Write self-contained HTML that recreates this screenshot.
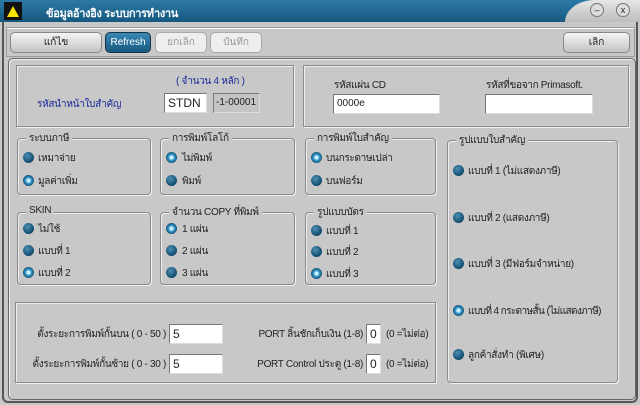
<!DOCTYPE html>
<html><head><meta charset="utf-8"><style>
*{box-sizing:border-box;margin:0;padding:0}
body{width:640px;height:405px;overflow:hidden;background:#c8c8c8;font-family:"Liberation Sans","DejaVu Sans",sans-serif;font-size:10px;color:#222;position:relative}
.a{position:absolute}
.title{left:0;top:0;width:640px;height:22px;background:linear-gradient(#2c7aa6,#16587f);}
.tr{left:565px;top:0;width:75px;height:22px;background:linear-gradient(#e6e6e6,#bdbdbd);border-top-left-radius:30px 22px}
.btn{position:absolute;height:21px;border:1px solid #888;border-radius:5px;background:linear-gradient(#f4f4f4,#c4c4c4);text-align:center;line-height:19px;font-size:10px}
.grp{position:absolute;border:1px solid #8a8a8a;border-radius:4px;box-shadow:1px 1px 0 #eee inset,1px 1px 0 #f0f0f0}
.lg{position:absolute;top:-8px;left:8px;background:#c8c8c8;padding:0 3px;font-size:10px;white-space:nowrap;letter-spacing:-0.3px}
.r{position:absolute;width:11px;height:11px;border-radius:50%;background:radial-gradient(circle at 40% 35%,#4f8fb4,#0f4a6c 70%,#08324a)}
.r.on{background:radial-gradient(circle,#c8f0ff 0 20%,#3aa0d0 35%,#0f4a6c 75%)}
.t{position:absolute;font-size:10px;white-space:nowrap;letter-spacing:-0.3px}
.rt{position:absolute;font-size:10px;white-space:nowrap;letter-spacing:-0.3px;text-align:right}
.in{position:absolute;height:20px;background:#fff;border:1px solid #777;border-right-color:#ddd;border-bottom-color:#ddd;font-size:12px;padding-left:3px;line-height:18px;white-space:nowrap;overflow:hidden}
</style></head><body>
<div class="a title"></div>
<div class="a tr"></div>
<div class="a" style="left:4px;top:2px;width:18px;height:18px;background:#111"></div>
<div class="a" style="left:7px;top:6px;width:0;height:0;border-left:6px solid transparent;border-right:6px solid transparent;border-bottom:11px solid #ffe600"></div>
<div class="t" style="left:46px;top:4px;color:#fff;font-weight:bold;font-size:11px">ข้อมูลอ้างอิง ระบบการทำงาน</div>
<div class="a" style="left:590px;top:3px;width:14px;height:14px;border-radius:50%;border:1px solid #777;background:#ddd;font-size:9px;text-align:center;line-height:12px">–</div>
<div class="a" style="left:616px;top:3px;width:14px;height:14px;border-radius:50%;border:1px solid #777;background:#ddd;font-size:9px;text-align:center;line-height:12px">x</div>
<div class="a" style="left:2px;top:22px;width:636px;height:381px;border:2px solid #555;border-top:none;border-radius:0 0 6px 6px"></div>
<div class="a" style="left:6px;top:27px;width:629px;height:30px;border:1px solid #999;box-shadow:0 1px 0 #fff inset"></div>
<div class="btn" style="left:10px;top:32px;width:92px">แก้ไข</div>
<div class="btn" style="left:105px;top:32px;width:46px;background:linear-gradient(#3a87b3,#175a82);color:#fff;border-color:#134">Refresh</div>
<div class="btn" style="left:155px;top:32px;width:52px;background:#eee;color:#999;border-color:#aaa">ยกเลิก</div>
<div class="btn" style="left:210px;top:32px;width:52px;background:#eee;color:#999;border-color:#aaa">บันทึก</div>
<div class="btn" style="left:563px;top:32px;width:67px">เลิก</div>
<div class="a" style="left:8px;top:58px;width:628px;height:342px;border:1px solid #666;border-radius:5px;box-shadow:1px 1px 0 #eee inset"></div>
<div class="grp" style="left:16px;top:65px;width:278px;height:62px;border-radius:0"></div>
<div class="t" style="left:176px;top:74px;color:#1a2a9a">( จำนวน 4 หลัก )</div>
<div class="t" style="left:37px;top:97px;color:#1a2a9a">รหัสนำหน้าใบสำคัญ</div>
<div class="in" style="left:164px;top:93px;width:43px">STDN</div>
<div class="in" style="left:213px;top:93px;width:47px;background:#c4c4c4;font-size:10px;padding-left:2px">-1-00001</div>
<div class="grp" style="left:303px;top:65px;width:326px;height:62px;border-radius:0"></div>
<div class="t" style="left:334px;top:78px">รหัสแผ่น CD</div>
<div class="in" style="left:333px;top:94px;width:107px;font-size:10px">0000e</div>
<div class="t" style="left:486px;top:78px">รหัสที่ขอจาก Primasoft.</div>
<div class="in" style="left:485px;top:94px;width:108px"></div>

<div class="grp" style="left:17px;top:138px;width:134px;height:57px"><span class="lg">ระบบภาษี</span></div>
<div class="r" style="left:23px;top:152px"></div><div class="t" style="left:38px;top:151px">เหมาจ่าย</div>
<div class="r on" style="left:23px;top:175px"></div><div class="t" style="left:38px;top:174px">มูลค่าเพิ่ม</div>
<div class="grp" style="left:160px;top:138px;width:135px;height:57px"><span class="lg">การพิมพ์โลโก้</span></div>
<div class="r on" style="left:166px;top:152px"></div><div class="t" style="left:182px;top:151px">ไม่พิมพ์</div>
<div class="r" style="left:166px;top:175px"></div><div class="t" style="left:182px;top:174px">พิมพ์</div>
<div class="grp" style="left:305px;top:138px;width:131px;height:57px"><span class="lg">การพิมพ์ใบสำคัญ</span></div>
<div class="r on" style="left:311px;top:152px"></div><div class="t" style="left:326px;top:151px">บนกระดาษเปล่า</div>
<div class="r" style="left:311px;top:175px"></div><div class="t" style="left:326px;top:174px">บนฟอร์ม</div>

<div class="grp" style="left:17px;top:212px;width:134px;height:73px"><span class="lg">SKIN</span></div>
<div class="r" style="left:23px;top:223px"></div><div class="t" style="left:38px;top:222px">ไม่ใช้</div>
<div class="r" style="left:23px;top:245px"></div><div class="t" style="left:38px;top:244px">แบบที่ 1</div>
<div class="r on" style="left:23px;top:267px"></div><div class="t" style="left:38px;top:266px">แบบที่ 2</div>
<div class="grp" style="left:160px;top:212px;width:135px;height:73px"><span class="lg">จำนวน COPY ที่พิมพ์</span></div>
<div class="r on" style="left:166px;top:223px"></div><div class="t" style="left:182px;top:222px">1 แผ่น</div>
<div class="r" style="left:166px;top:245px"></div><div class="t" style="left:182px;top:244px">2 แผ่น</div>
<div class="r" style="left:166px;top:267px"></div><div class="t" style="left:182px;top:266px">3 แผ่น</div>
<div class="grp" style="left:305px;top:212px;width:131px;height:73px"><span class="lg">รูปแบบบัตร</span></div>
<div class="r" style="left:311px;top:225px"></div><div class="t" style="left:326px;top:224px">แบบที่ 1</div>
<div class="r" style="left:311px;top:246px"></div><div class="t" style="left:326px;top:245px">แบบที่ 2</div>
<div class="r on" style="left:311px;top:268px"></div><div class="t" style="left:326px;top:267px">แบบที่ 3</div>

<div class="grp" style="left:447px;top:140px;width:171px;height:243px"><span class="lg">รูปแบบใบสำคัญ</span></div>
<div class="r" style="left:453px;top:165px"></div><div class="t" style="left:468px;top:164px">แบบที่ 1 (ไม่แสดงภาษี)</div>
<div class="r" style="left:453px;top:212px"></div><div class="t" style="left:468px;top:211px">แบบที่ 2 (แสดงภาษี)</div>
<div class="r" style="left:453px;top:258px"></div><div class="t" style="left:468px;top:257px">แบบที่ 3 (มีฟอร์มจำหน่าย)</div>
<div class="r on" style="left:453px;top:305px"></div><div class="t" style="left:468px;top:304px;letter-spacing:-0.6px">แบบที่ 4 กระดาษสั้น (ไม่แสดงภาษี)</div>
<div class="r" style="left:453px;top:349px"></div><div class="t" style="left:468px;top:348px">ลูกค้าสั่งทำ (พิเศษ)</div>

<div class="grp" style="left:15px;top:302px;width:421px;height:81px;border-radius:0"></div>
<div class="rt" style="left:16px;width:150px;top:327px">ตั้งระยะการพิมพ์กั้นบน ( 0 - 50 )</div>
<div class="in" style="left:169px;top:324px;width:54px">5</div>
<div class="rt" style="left:16px;width:150px;top:357px">ตั้งระยะการพิมพ์กั้นซ้าย ( 0 - 30 )</div>
<div class="in" style="left:169px;top:354px;width:54px">5</div>
<div class="rt" style="left:230px;width:133px;top:327px">PORT ลิ้นชักเก็บเงิน (1-8)</div>
<div class="in" style="left:366px;top:324px;width:15px;padding-left:3px">0</div>
<div class="t" style="left:386px;top:327px">(0 =ไม่ต่อ)</div>
<div class="rt" style="left:230px;width:133px;top:357px">PORT Control ประตู (1-8)</div>
<div class="in" style="left:366px;top:354px;width:15px;padding-left:3px">0</div>
<div class="t" style="left:386px;top:357px">(0 =ไม่ต่อ)</div>
</body></html>
